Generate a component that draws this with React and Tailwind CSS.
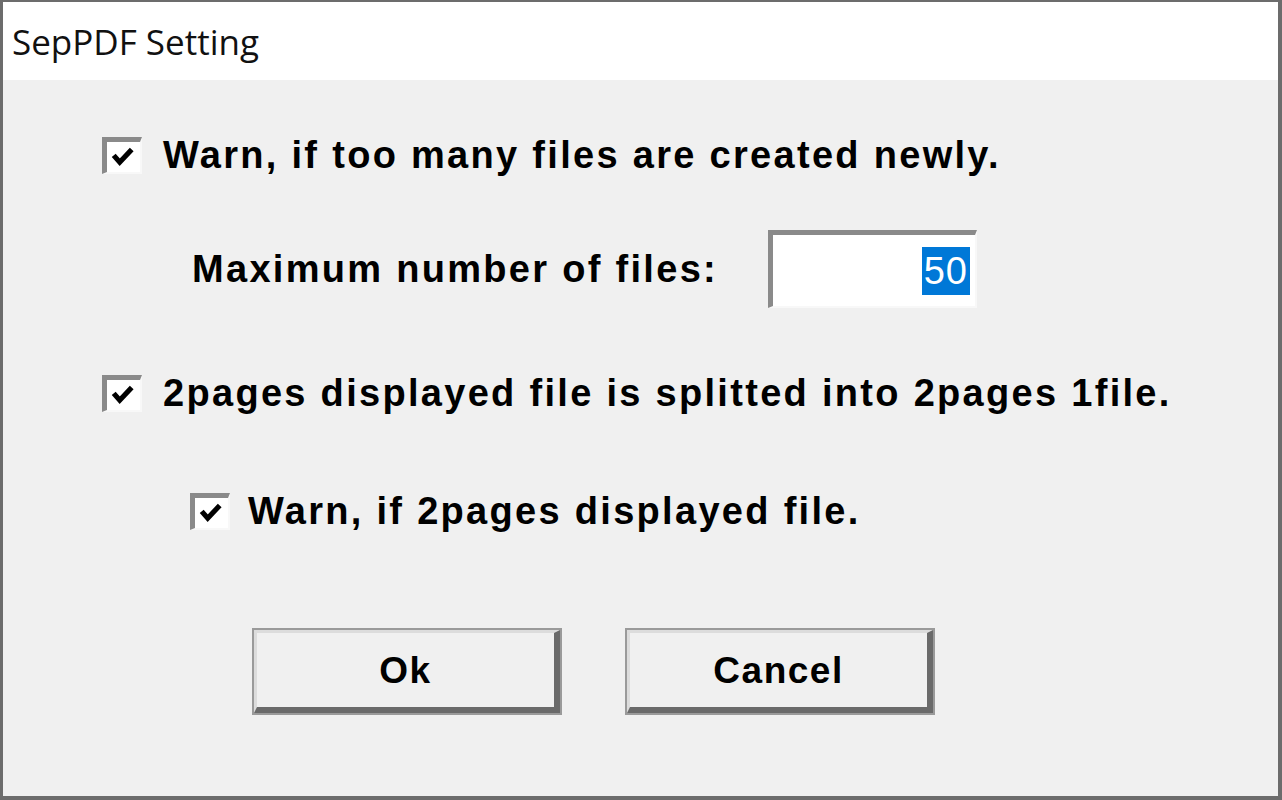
import React from "react";

const CheckBox = () => (
  <div className="relative w-[40px] h-[37px] shrink-0 bg-white border-t-[5px] border-l-[5px] border-b-[2px] border-r-[2px] border-t-[#8a8a8a] border-l-[#8a8a8a] border-b-[#f8f8f8] border-r-[#f8f8f8]">
    <svg viewBox="0 0 30 28" className="absolute left-[4px] top-[4px] w-[26px] h-[24px]">
      <path d="M3 11 L10 19 L24 4" fill="none" stroke="#000" strokeWidth="6" />
    </svg>
  </div>
);

const Button = ({ children }) => (
  <button className="w-[306px] h-[83px] bg-[#f0f0f0] border-t-[3px] border-l-[3px] border-b-[6px] border-r-[6px] border-t-[#dcdcdc] border-l-[#dcdcdc] border-b-[#6a6a6a] border-r-[#6a6a6a] outline outline-[2px] outline-[#9a9a9a] text-[37px] font-bold tracking-[1.5px] text-black leading-none">
    {children}
  </button>
);

const App = () => {
  return (
    <div className="w-[1282px] h-[800px] flex flex-col bg-[#f0f0f0] border-l-[3px] border-t-[2px] border-r-[4px] border-b-[4px] border-[#6c6c6c] overflow-hidden font-['Liberation_Sans',Arial,sans-serif]">
      <div className="h-[78px] bg-white flex items-center pl-[9px] shrink-0">
        <span className="text-[35px] text-[#111] font-['Open_Sans',sans-serif] leading-none">SepPDF Setting</span>
      </div>

      <div className="flex flex-col pl-[99px] text-black font-bold text-[38px] tracking-[2.3px] leading-none">
        <div className="flex items-center gap-[21px] h-[40px] mt-[55px]">
          <CheckBox />
          <span>Warn, if too many files are created newly.</span>
        </div>

        <div className="flex items-center pl-[90px] h-[78px] mt-[55px]">
          <span className="w-[576px]">Maximum number of files:</span>
          <div className="w-[209px] h-[78px] bg-white border-t-[5px] border-l-[5px] border-b-[2px] border-r-[2px] border-t-[#8a8a8a] border-l-[#8a8a8a] border-b-[#f8f8f8] border-r-[#f8f8f8] flex items-center justify-end pr-[5px]">
            <span className="bg-[#0078d7] text-white font-normal tracking-[1px] px-[2px] leading-[48px]">50</span>
          </div>
        </div>

        <div className="flex items-center gap-[21px] h-[40px] mt-[65px]">
          <CheckBox />
          <span>2pages displayed file is splitted into 2pages 1file.</span>
        </div>

        <div className="flex items-center gap-[18px] h-[40px] ml-[88px] mt-[78px]">
          <CheckBox />
          <span>Warn, if 2pages displayed file.</span>
        </div>

        <div className="flex gap-[67px] ml-[152px] mt-[99px]">
          <Button>Ok</Button>
          <Button>Cancel</Button>
        </div>
      </div>
    </div>
  );
};

export default App;
